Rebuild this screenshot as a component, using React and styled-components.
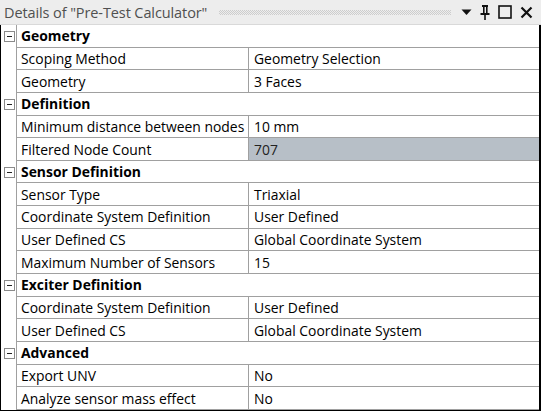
import React from "react";
import styled, { createGlobalStyle } from "styled-components";

const Global = createGlobalStyle`
  html, body { margin: 0; padding: 0; background: #fff; }
  body { width: 541px; height: 411px; overflow: hidden; font-family: "Open Sans", "Noto Sans", sans-serif; }
`;

const Panel = styled.div`
  width: 541px;
  height: 411px;
  box-sizing: border-box;
  display: flex;
  flex-direction: column;
  background: #fff;
`;

const TitleBar = styled.div`
  height: 24px;
  flex: none;
  display: flex;
  align-items: center;
  background: #ededed;
  border-bottom: 1px solid #d9d9d9;
  padding: 0 8px 0 4px;
  gap: 6px;
`;

const Title = styled.span`
  font-size: 14.5px;
  color: #505050;
  white-space: nowrap;
  letter-spacing: -0.1px;
`;

const Grip = styled.span`
  flex: 1;
  height: 5px;
  margin: 1px 4px 0 6px;
  background: repeating-conic-gradient(#cdcdcd 0 25%, transparent 0 50%) 0 0 / 2px 2px;
`;

const Icons = styled.div`
  display: flex;
  align-items: center;
  gap: 8px;
`;

const Body = styled.div`
  flex: 1;
  border-left: 1px solid #000;
  border-right: 2px solid #000;
  border-bottom: 2px solid #000;
  display: grid;
  grid-template-columns: 16px 232px 1fr;
  grid-auto-rows: 22.65px;
  font-size: 13.9px;
  color: #000;
`;

const Gutter = styled.div`
  border-right: 1px solid #a0a0a0;
  display: flex;
  align-items: center;
  justify-content: center;
  padding-left: 1px;
`;

const Toggle = styled.span`
  width: 9px;
  height: 9px;
  border: 1px solid #8a8a8a;
  background: #fff;
  display: flex;
  align-items: center;
  justify-content: center;
  &::after {
    content: "";
    width: 5px;
    height: 1px;
    background: #222;
  }
`;

const Header = styled.div`
  grid-column: 2 / 4;
  border-bottom: 1px solid #a0a0a0;
  display: flex;
  align-items: center;
  padding-left: 4px;
  font-weight: 700;
  font-size: 13.9px;
`;

const Cell = styled.div`
  border-bottom: 1px solid #a0a0a0;
  border-right: ${(p) => (p.$name ? "1px solid #a0a0a0" : "none")};
  background: ${(p) => (p.$hl ? "#b7bfc7" : "#fff")};
  display: flex;
  align-items: center;
  padding-left: ${(p) => (p.$name ? "4px" : "5px")};
  white-space: nowrap;
  overflow: hidden;
  color: ${(p) => (p.$hl ? "#222" : "#000")};
`;

const sections = [
  {
    title: "Geometry",
    rows: [
      ["Scoping Method", "Geometry Selection"],
      ["Geometry", "3 Faces"],
    ],
  },
  {
    title: "Definition",
    rows: [
      ["Minimum distance between nodes", "10 mm"],
      ["Filtered Node Count", "707", true],
    ],
  },
  {
    title: "Sensor Definition",
    rows: [
      ["Sensor Type", "Triaxial"],
      ["Coordinate System Definition", "User Defined"],
      ["User Defined CS", "Global Coordinate System"],
      ["Maximum Number of Sensors", "15"],
    ],
  },
  {
    title: "Exciter Definition",
    rows: [
      ["Coordinate System Definition", "User Defined"],
      ["User Defined CS", "Global Coordinate System"],
    ],
  },
  {
    title: "Advanced",
    rows: [
      ["Export UNV", "No"],
      ["Analyze sensor mass effect", "No"],
    ],
  },
];

export default function App() {
  return (
    <>
      <Global />
      <Panel>
        <TitleBar>
          <Title>Details of "Pre-Test Calculator"</Title>
          <Grip />
          <Icons>
            <svg width="11" height="8" viewBox="0 0 11 8">
              <path d="M0.5 1.5 H10.5 L5.5 7 Z" fill="#111" />
            </svg>
            <svg width="10" height="16" viewBox="0 0 10 16">
              <rect x="2" y="1" width="6" height="2" fill="#111" />
              <rect x="3" y="1" width="1.6" height="9" fill="#111" />
              <rect x="6" y="1" width="1.6" height="9" fill="#111" />
              <rect x="0.5" y="9" width="9" height="2" fill="#111" />
              <rect x="4.2" y="10" width="1.6" height="6" fill="#111" />
            </svg>
            <svg width="14" height="14" viewBox="0 0 14 14">
              <rect x="1" y="1" width="12" height="12" fill="none" stroke="#111" strokeWidth="1.6" />
            </svg>
            <svg width="13" height="13" viewBox="0 0 13 13">
              <path d="M1.5 1.5 L11.5 11.5 M11.5 1.5 L1.5 11.5" stroke="#111" strokeWidth="2.2" />
            </svg>
          </Icons>
        </TitleBar>
        <Body>
          {sections.map((s) => (
            <React.Fragment key={s.title}>
              <Gutter>
                <Toggle />
              </Gutter>
              <Header>{s.title}</Header>
              {s.rows.map(([n, v, hl], i) => (
                <React.Fragment key={i}>
                  <Gutter />
                  <Cell $name>{n}</Cell>
                  <Cell $hl={hl}>{v}</Cell>
                </React.Fragment>
              ))}
            </React.Fragment>
          ))}
        </Body>
      </Panel>
    </>
  );
}
